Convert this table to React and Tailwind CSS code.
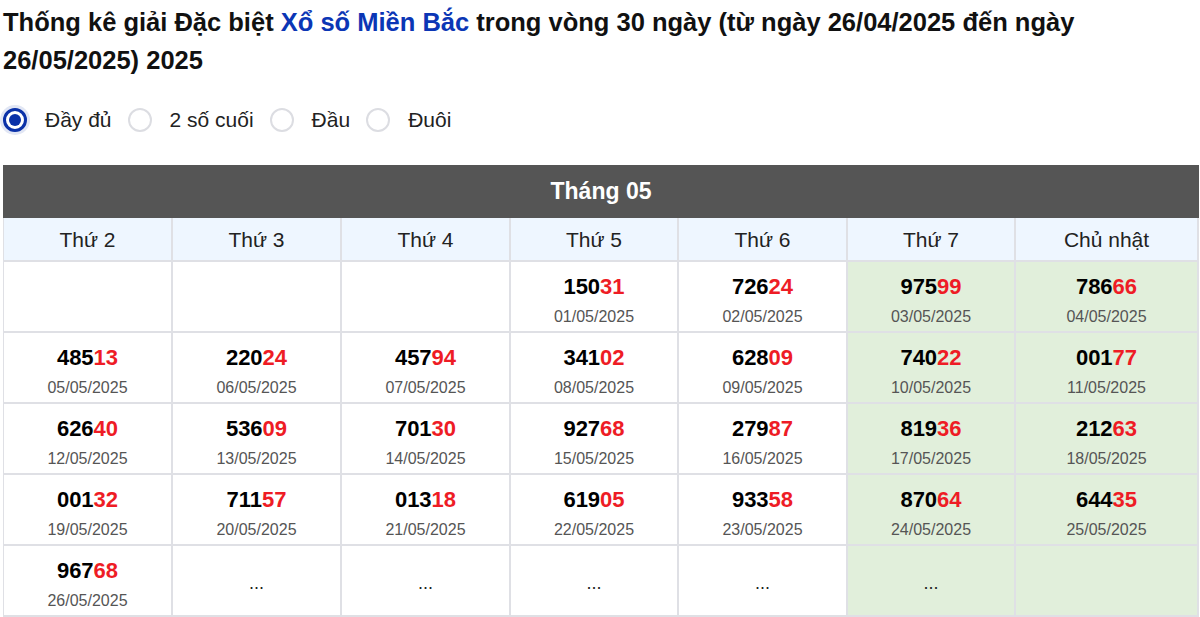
import { useState } from 'react';

const days = ['Thứ 2', 'Thứ 3', 'Thứ 4', 'Thứ 5', 'Thứ 6', 'Thứ 7', 'Chủ nhật'];

// null = empty cell, '...' = pending, otherwise [number, date]
const weeks = [
    [null, null, null, ['15031', '01/05/2025'], ['72624', '02/05/2025'], ['97599', '03/05/2025'], ['78666', '04/05/2025']],
    [['48513', '05/05/2025'], ['22024', '06/05/2025'], ['45794', '07/05/2025'], ['34102', '08/05/2025'], ['62809', '09/05/2025'], ['74022', '10/05/2025'], ['00177', '11/05/2025']],
    [['62640', '12/05/2025'], ['53609', '13/05/2025'], ['70130', '14/05/2025'], ['92768', '15/05/2025'], ['27987', '16/05/2025'], ['81936', '17/05/2025'], ['21263', '18/05/2025']],
    [['00132', '19/05/2025'], ['71157', '20/05/2025'], ['01318', '21/05/2025'], ['61905', '22/05/2025'], ['93358', '23/05/2025'], ['87064', '24/05/2025'], ['64435', '25/05/2025']],
    [['96768', '26/05/2025'], '...', '...', '...', '...', '...', null],
];

const options = ['Đầy đủ', '2 số cuối', 'Đầu', 'Đuôi'];

function Radio({ checked, label, onClick }) {
    return (
        <button onClick={onClick} className="flex items-center gap-[18px] cursor-pointer">
            {checked ? (
                <span className="w-6 h-6 rounded-full border-[3px] border-[#0a31a8] bg-white flex items-center justify-center shadow-[0_0_0_3px_rgba(10,49,168,0.12)]">
                    <span className="w-3 h-3 rounded-full bg-[#0a31a8]"></span>
                </span>
            ) : (
                <span className="w-6 h-6 rounded-full border-2 border-[#dcdde2] bg-white"></span>
            )}
            <span className="text-[21px] text-[#222] leading-6">{label}</span>
        </button>
    );
}

export default function App() {
    const [mode, setMode] = useState(0);

    return (
        <div className="w-[1200px] h-[617px] overflow-hidden bg-white font-['Liberation_Sans',Arial,sans-serif] text-black">
            <h1 className="pl-[3px] pt-[3px] w-[1090px] text-[25.5px] font-bold leading-[38px] text-[#111]">
                Thống kê giải Đặc biệt <span className="text-[#0b36b5]">Xổ số Miền Bắc</span> trong vòng 30 ngày (từ ngày 26/04/2025 đến ngày 26/05/2025) 2025
            </h1>

            <div className="flex items-center gap-4 pl-[3px] mt-[29px]">
                {options.map((o, i) => (
                    <Radio key={o} label={o} checked={mode === i} onClick={() => setMode(i)} />
                ))}
            </div>

            <div className="ml-[3px] mt-[33px] w-[1196px]">
                <div className="h-[53px] bg-[#555555] flex items-center justify-center text-white text-[23px] font-bold">
                    Tháng 05
                </div>
                <div className="grid grid-cols-[169px_169px_169px_168px_169px_168px_1fr] border-l border-[#dfe0e5]">
                    {days.map(d => (
                        <div key={d} className="h-11 pt-[2px] bg-[#eef6ff] border-r-2 border-b-2 border-[#dfe0e5] flex items-center justify-center text-[21px] text-[#222]">
                            {d}
                        </div>
                    ))}
                    {weeks.map((week, wi) =>
                        week.map((cell, ci) => (
                            <div
                                key={`${wi}-${ci}`}
                                className={`h-[71px] pt-[6px] border-r-2 border-b-2 border-[#dfe0e5] flex flex-col items-center justify-center ${ci >= 5 ? 'bg-[#e1efdb]' : 'bg-white'}`}
                            >
                                {cell === '...' ? (
                                    <span className="text-[18px] text-[#222]">...</span>
                                ) : cell ? (
                                    <>
                                        <span className="text-[22px] font-bold leading-6">
                                            {cell[0].slice(0, 3)}
                                            <span className="text-[#ee1c25]">{cell[0].slice(3)}</span>
                                        </span>
                                        <span className="text-[16px] text-[#555] mt-[10px] leading-4">{cell[1]}</span>
                                    </>
                                ) : null}
                            </div>
                        ))
                    )}
                </div>
            </div>
        </div>
    );
}
